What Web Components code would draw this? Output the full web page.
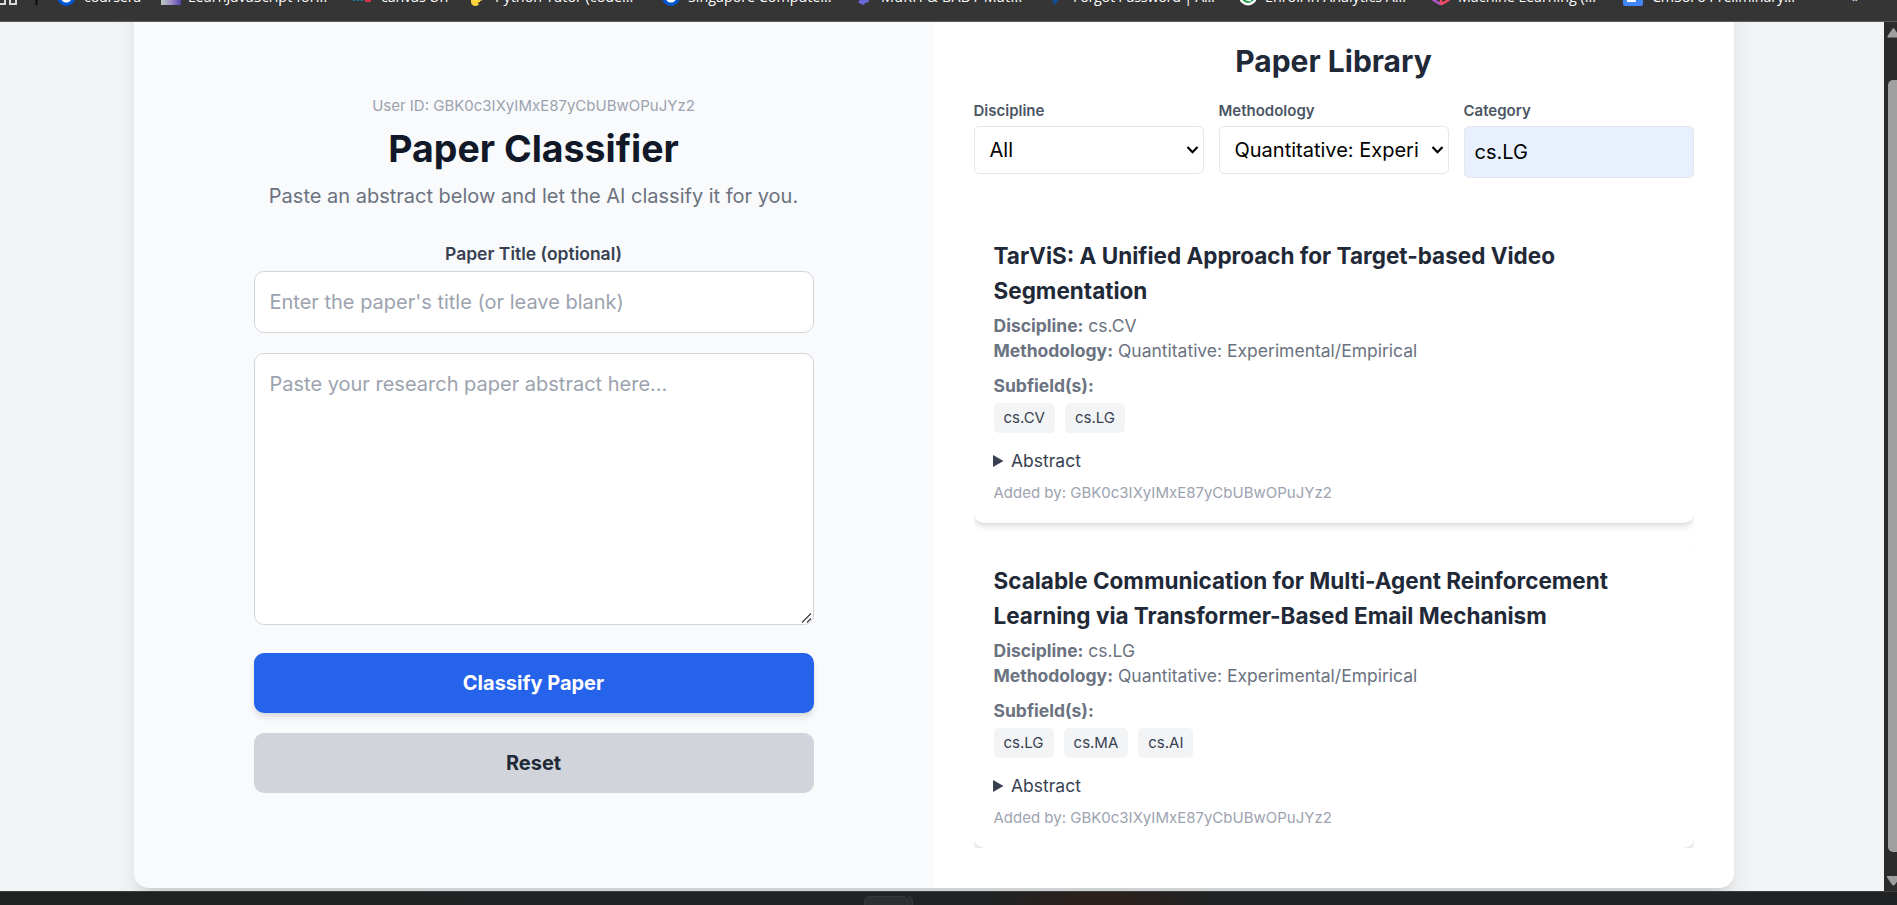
<!DOCTYPE html>
<html lang="en">
<head>
<meta charset="utf-8">
<title>Paper Classifier</title>
<style>
html,body{margin:0;height:100%;overflow:hidden}
body{font-family:Inter,"Liberation Sans",sans-serif;font-size:20px;line-height:30px;color:#1f2937;background:#f3f4f6}
</style>
</head>
<body>
<browser-window></browser-window>
<script>
const define=(name,html,setup)=>{
  const t=document.createElement('template');
  t.innerHTML='<style>*{box-sizing:border-box}:host{display:block;box-sizing:border-box}[hidden]{display:none}</style>'+html;
  customElements.define(name,class extends HTMLElement{
    constructor(){super();this.attachShadow({mode:'open'}).appendChild(t.content.cloneNode(true));}
    connectedCallback(){if(setup)setup(this,this.shadowRoot);}
  });
};

define('bookmark-item',`
<style>
:host{flex:none;display:flex;height:20px;align-items:flex-end;white-space:nowrap;font:14.3px/20px "Open Sans","Noto Sans",sans-serif;color:#fff}
.icon{flex:none;height:20px;display:flex;align-items:flex-end}
::slotted(svg){display:block}
.label{height:20px;margin-bottom:-1px}
</style><span class="icon"><slot name="icon"></slot></span><span class="label"><slot></slot></span>`,
(h,r)=>{h.style.width=h.getAttribute('w')+'px';r.querySelector('.icon').style.width=(h.getAttribute('iw')||27)+'px';
r.querySelector('.label').style.letterSpacing=(h.getAttribute('ls')||0)+'px';});

define('bookmark-bar',`
<style>
:host{height:22px;background:#353535;border-bottom:1px solid #5c5c5c;overflow:hidden;position:relative;z-index:1}
.row{display:flex;margin-top:-14px;height:20px}
.apps{width:57px;flex:none;display:flex;align-items:flex-end}
svg{display:block}
</style>
<div class="row">
<div class="apps"><svg width="57" height="20"><path d="M-1 10h6v8h-6zM10 10h6v8h-6z" fill="none" stroke="#d8d8d8" stroke-width="2"/><path d="M36.5 6v13" stroke="#0b0b0b" stroke-width="2"/></svg></div>
<bookmark-item w="104" ls="-.2"><svg slot="icon" width="19" height="20"><circle cx="9.300" cy="11" r="9" fill="#0056d2"/><circle cx="9.300" cy="11" r="5.500" fill="#fff"/></svg>coursera</bookmark-item>
<bookmark-item w="191" ls=".1"><svg slot="icon" width="20" height="20"><defs><linearGradient id="g"><stop stop-color="#b9c9bd"/><stop offset=".5" stop-color="#a08fc9"/><stop offset="1" stop-color="#5542a8"/></linearGradient></defs><path d="M0 1h20v18H0z" fill="url(#g)"/></svg>LearnJavaScript for...</bookmark-item>
<bookmark-item w="114" iw="29" ls="-.15"><svg slot="icon" width="22" height="20"><path d="M2 8v7M6 8v7M10 8v7" stroke="#167a9b" stroke-width="2.500"/><path d="M14 8v7h4V8" fill="none" stroke="#d53049" stroke-width="2"/></svg>canvas Un</bookmark-item>
<bookmark-item w="196" iw="29"><svg slot="icon" width="22" height="20"><path d="M5 7h10q2 0 2 4t-3 4v1q-1 4-5 4-4-1-4-4z" fill="#ffd43b"/><circle cx="13" cy="17" r="1" fill="#353535"/></svg>Python Tutor (code...</bookmark-item>
<bookmark-item w="192" iw="26"><svg slot="icon" width="19" height="20"><circle cx="9" cy="11" r="9" fill="#0056d2"/><circle cx="9" cy="11" r="5.500" fill="#fff"/></svg>Singapore Compute...</bookmark-item>
<bookmark-item w="192" iw="27" ls=".3"><svg slot="icon" width="20" height="20"><path d="M5 7h9l3 4-3 2 1 3-4 1-1 2-3-1-3-2 2-2-5-2z" fill="#6c68d9"/></svg>MuRH &amp; BADT Mat...</bookmark-item>
<bookmark-item w="193" iw="27" ls="-.25"><svg slot="icon" width="20" height="20"><path d="M5 8h8q1 5-4 11-5-6-4-11z" fill="#114f91"/></svg>Forgot Password | A...</bookmark-item>
<bookmark-item w="193" iw="26"><svg slot="icon" width="20" height="20"><circle cx="9" cy="10.500" r="9" fill="#fff"/><circle cx="9" cy="10.500" r="6.500" fill="#21a04b"/><path d="M7 13.500l5 1" stroke="#fff" stroke-width="2"/></svg>Enroll in Analytics A...</bookmark-item>
<bookmark-item w="191" iw="26"><svg slot="icon" width="20" height="20"><path d="M1.500 8v6L9 18.500" fill="none" stroke="#b056cc" stroke-width="2.500"/><path d="M9 18.500l7.500-4.500V8M9 18V8" fill="none" stroke="#ed4c64" stroke-width="2.500"/></svg>Machine Learning (...</bookmark-item>
<bookmark-item w="229" iw="29" ls="-.15"><svg slot="icon" width="20" height="20"><path d="M0 5h20v13q0 2-2 2H2q-2 0-2-2z" fill="#4285f4"/><path d="M4 6h7v6l2 3v1H4z" fill="#fff"/></svg>CmSoFo Preliminary...</bookmark-item>
<bookmark-item w="30" iw="0">»</bookmark-item>
</div>`);

define('field-input',`
<style>
:host{position:relative}
input,textarea{display:block;width:100%;margin:0;border:1px solid #d1d5db;border-radius:10px;background:#fff;font:inherit;line-height:30px;color:#111827;padding:15px;outline:0}
input{height:62px}textarea{height:272px;resize:none}
::placeholder{color:#9ca3af;opacity:1}
svg{position:absolute;right:2px;bottom:2px}
</style><input><textarea></textarea><svg width="11" height="11"><path d="M1 10.500L10 1.500M6 10.500L10 6.500" fill="none" stroke="#444" stroke-width="1.300"/></svg>`,
(h,r)=>{const m=h.hasAttribute('multiline');const keep=r.querySelector(m?'textarea':'input');r.querySelector(m?'input':'textarea').remove();if(!m)r.querySelector('svg').remove();keep.placeholder=h.getAttribute('placeholder');});

define('action-button',`
<style>
:host{height:60px;border-radius:10px;display:flex;align-items:center;justify-content:center;font-weight:700;background:#d1d5db;color:#1f2937}
:host([primary]){background:#2563eb;color:#fff;box-shadow:0 5px 7.5px -1.250px rgba(0,0,0,.1),0 2.500px 5px -2.500px rgba(0,0,0,.1)}
</style><slot></slot>`);

define('classifier-panel',`
<style>
:host{width:800px;background:#f9fafc;display:flex;justify-content:center;padding-top:134px;text-align:center}
.form{width:560px}
.user{font-size:15px;line-height:20px;color:#9ca3af}
h1{margin:10px 0;font-size:37.500px;line-height:45px;font-weight:700;color:#111827}
p{margin:0;color:#6b7280;line-height:30px}
label{display:block;margin-top:30px;height:30px;font-size:17.500px;line-height:25px;font-weight:600;color:#374151}
field-input[multiline]{margin:20px 0 28px}
action-button+action-button{margin-top:20px}
</style>
<div class="form"><div class="user">User ID: GBK0c3IXyIMxE87yCbUBwOPuJYz2</div>
<h1>Paper Classifier</h1><p>Paste an abstract below and let the AI classify it for you.</p>
<label>Paper Title (optional)</label>
<field-input placeholder="Enter the paper's title (or leave blank)"></field-input>
<field-input multiline placeholder="Paste your research paper abstract here..."></field-input>
<action-button primary>Classify Paper</action-button><action-button>Reset</action-button></div>`);

define('filter-field',`
<style>
:host{flex:1;min-width:0}
.l{font-size:15px;line-height:20px;height:25px;font-weight:600;color:#4b5563}
.box{height:48px;border:1px solid #e5e7eb;border-radius:5px;background:#fff;color:#000;display:flex;align-items:center;justify-content:space-between;padding:0 4px 0 15px;white-space:nowrap}
:host([plain]) .box{height:52px;background:#e8f0fe;padding-left:10px}
:host([plain]) svg{display:none}
</style><div class="l"></div><div class="box"><span><slot></slot></span><svg width="13" height="10"><path d="M1.500 2L6.500 7.200 11.500 2" fill="none" stroke="#000" stroke-width="2.200"/></svg></div>`,
(h,r)=>{r.querySelector('.l').textContent=h.getAttribute('label');});

define('tag-chip',`<style>:host{padding:5px 10px;border-radius:5px;background:#f3f4f6;color:#374151;font-size:15px;line-height:20px}</style><slot></slot>`);

define('paper-card',`
<style>
:host{height:305px;padding:20px;border-radius:10px;background:#fff;box-shadow:0 5px 7.500px -1.250px rgba(0,0,0,.1),0 2.500px 5px -2.500px rgba(0,0,0,.1);font-size:17.500px;line-height:25px;color:#6b7280}
h3{margin:0 0 5px;font-size:22.500px;line-height:35px;font-weight:700;color:#1f2937}
b{font-weight:700}
.sub{margin-top:10px}
.tags{display:flex;gap:10px;margin-top:5px}
.abs{display:flex;align-items:center;gap:7.500px;margin-top:15px;color:#374151}
.by{margin-top:10px;font-size:15px;line-height:20px;color:#9ca3af}
svg{display:block;margin-left:-1px}
</style>
<h3><slot name="title"></slot></h3>
<div><b>Discipline:</b> <slot name="discipline"></slot></div>
<div><b>Methodology:</b> Quantitative: Experimental/Empirical</div>
<div class="sub"><b>Subfield(s):</b></div>
<div class="tags"><slot name="tags"></slot></div>
<div class="abs"><svg width="11" height="12"><path d="M0 0L10.500 6 0 12z" fill="#374151"/></svg><span>Abstract</span></div>
<div class="by">Added by: GBK0c3IXyIMxE87yCbUBwOPuJYz2</div>`);

define('paper-library',`
<style>
:host{width:800px;background:#fff;padding:79px 40px 40px}
h2{margin:0;text-align:center;font-size:30px;line-height:40px;font-weight:700;color:#1f2937}
.filters{display:flex;gap:15px;margin-top:20px;height:97px}
.list{display:flex;flex-direction:column;gap:20px;overflow:hidden;height:650px;padding-top:20px}
paper-card{flex:none}
</style>
<h2>Paper Library</h2>
<div class="filters"><filter-field label="Discipline">All</filter-field><filter-field label="Methodology">Quantitative: Experi</filter-field><filter-field label="Category" plain>cs.LG</filter-field></div>
<div class="list">
<paper-card><span slot="title">TarViS: A Unified Approach for Target-based Video Segmentation</span><span slot="discipline">cs.CV</span><tag-chip slot="tags">cs.CV</tag-chip><tag-chip slot="tags">cs.LG</tag-chip></paper-card>
<paper-card><span slot="title">Scalable Communication for Multi-Agent Reinforcement Learning via Transformer-Based Email Mechanism</span><span slot="discipline">cs.LG</span><tag-chip slot="tags">cs.LG</tag-chip><tag-chip slot="tags">cs.MA</tag-chip><tag-chip slot="tags">cs.AI</tag-chip></paper-card>
</div>`);

define('page-scrollbar',`
<style>
:host{width:13px;flex:none;background:#2c2c2c;overflow:hidden}
svg{display:block}
</style><svg width="13" height="869"><path d="M8.800 6.500q.7-1 1.400 0l5 7.500q.5 1.500-1 1.500H4.500q-1.500 0-1-1.500z" fill="#9f9f9f"/><rect x="4" y="58" width="14" height="772" rx="5" fill="#9f9f9f"/><path d="M4 854h11q1.500 0 1 1.500l-5 7q-1.500 2-3 0l-5-7q-.5-1.500 1-1.500z" fill="#9f9f9f"/></svg>`);

define('task-strip',`
<style>
:host{height:14px;border-top:1px solid #3c3e3f;background:linear-gradient(90deg,#202222 0,#202324 52%,#2b201d 57%,#2b201d 59%,#202324 64%,#202223);overflow:hidden}
.tabs{display:flex;padding:4px 0 0 864px}
i{display:block;height:16px;width:44px;border:1px solid #36393a;border-radius:5px;background:#2d2f30}
i+i{width:5px;border-left:0;border-radius:0 5px 0 0}
</style><div class="tabs"><i></i><i></i></div>`);

define('browser-window',`
<style>
:host{height:905px;display:flex;flex-direction:column}
.view{height:869px;display:flex;overflow:hidden}
.page{width:1884px;background:#f3f4f6;padding-left:133.500px;overflow:hidden}
.card{width:1600px;height:926px;margin-top:-60px;display:flex;border-radius:15px;box-shadow:0 25px 31.250px -6.250px rgba(0,0,0,.1),0 10px 12.500px -7.500px rgba(0,0,0,.1)}
classifier-panel{border-radius:15px 0 0 15px}paper-library{border-radius:0 15px 15px 0}
</style>
<bookmark-bar></bookmark-bar>
<div class="view"><div class="page"><div class="card"><classifier-panel></classifier-panel><paper-library></paper-library></div></div><page-scrollbar></page-scrollbar></div>
<task-strip></task-strip>`);
</script>
</body>
</html>
